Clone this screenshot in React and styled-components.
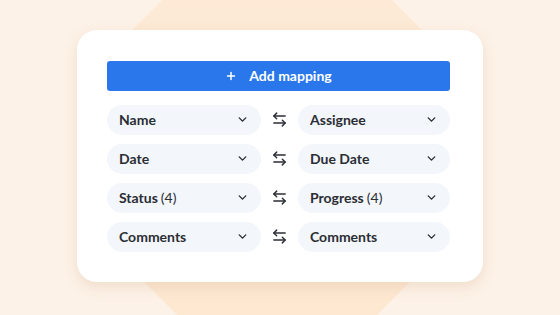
import React from 'react'
import styled, { createGlobalStyle } from 'styled-components'
import { ArrowLeftRight, ChevronDown, Plus } from 'lucide-react'

const GlobalStyle = createGlobalStyle`
  html, body {
    margin: 0;
    padding: 0;
  }
  body {
    font-family: Lato, "Open Sans", sans-serif;
  }
`

const Stage = styled.div`
  position: relative;
  width: 560px;
  height: 315px;
  overflow: hidden;
  background: #fdf2e7;
  display: flex;
  align-items: center;
  justify-content: center;
`

const Backdrop = styled.div`
  position: absolute;
  left: 122px;
  top: -30px;
  width: 310px;
  height: 360px;
  background: linear-gradient(180deg, #fde9d4 0%, #fdebd8 60%, #fde7d0 100%);
  clip-path: polygon(70px 0, calc(100% - 70px) 0, 100% 70px, 100% calc(100% - 70px), calc(100% - 70px) 100%, 70px 100%, 0 calc(100% - 70px), 0 70px);
`

const Card = styled.div`
  position: relative;
  width: 406px;
  box-sizing: border-box;
  padding: 31px 33px 30px 30px;
  background: #ffffff;
  border-radius: 20px;
  box-shadow: 0 5px 14px rgba(190, 150, 110, 0.22);
  display: flex;
  flex-direction: column;
  gap: 14px;
  margin-top: -4px;
`

const AddButton = styled.button`
  height: 30px;
  border: none;
  border-radius: 3px;
  background: #2a77ec;
  color: #ffffff;
  font-family: Lato, sans-serif;
  font-weight: 700;
  font-size: 14px;
  display: flex;
  align-items: center;
  justify-content: center;
  gap: 12px;
  padding: 0;
`

const Rows = styled.div`
  display: flex;
  flex-direction: column;
  gap: 9px;
`

const Row = styled.div`
  display: grid;
  grid-template-columns: 154px 37px 1fr;
  align-items: center;
`

const Select = styled.div`
  height: 30px;
  border-radius: 15px;
  background: #f3f6fa;
  display: flex;
  align-items: center;
  justify-content: space-between;
  padding: 0 12px 0 12px;
  color: #2b2e35;
  font-size: 14px;
  font-weight: 700;
`

const Count = styled.span`
  font-weight: 400;
  margin-left: 3px;
`

const Swap = styled.div`
  display: flex;
  justify-content: center;
  color: #2b2e35;
`

const mappings = [
  { from: 'Name', to: 'Assignee' },
  { from: 'Date', to: 'Due Date' },
  { from: 'Status', fromCount: 4, to: 'Progress', toCount: 4 },
  { from: 'Comments', to: 'Comments' },
]

const Field = ({ label, count }) => (
  <Select>
    <span>
      {label}
      {count != null && <Count>({count})</Count>}
    </span>
    <ChevronDown size={13} strokeWidth={2.6} />
  </Select>
)

const App = () => (
  <>
    <GlobalStyle />
    <Stage>
      <Backdrop />
      <Card>
        <AddButton>
          <Plus size={12} strokeWidth={3} />
          Add mapping
        </AddButton>
        <Rows>
          {mappings.map((m) => (
            <Row key={m.from + m.to}>
              <Field label={m.from} count={m.fromCount} />
              <Swap>
                <ArrowLeftRight size={17} strokeWidth={2} />
              </Swap>
              <Field label={m.to} count={m.toCount} />
            </Row>
          ))}
        </Rows>
      </Card>
    </Stage>
  </>
)

export default App
